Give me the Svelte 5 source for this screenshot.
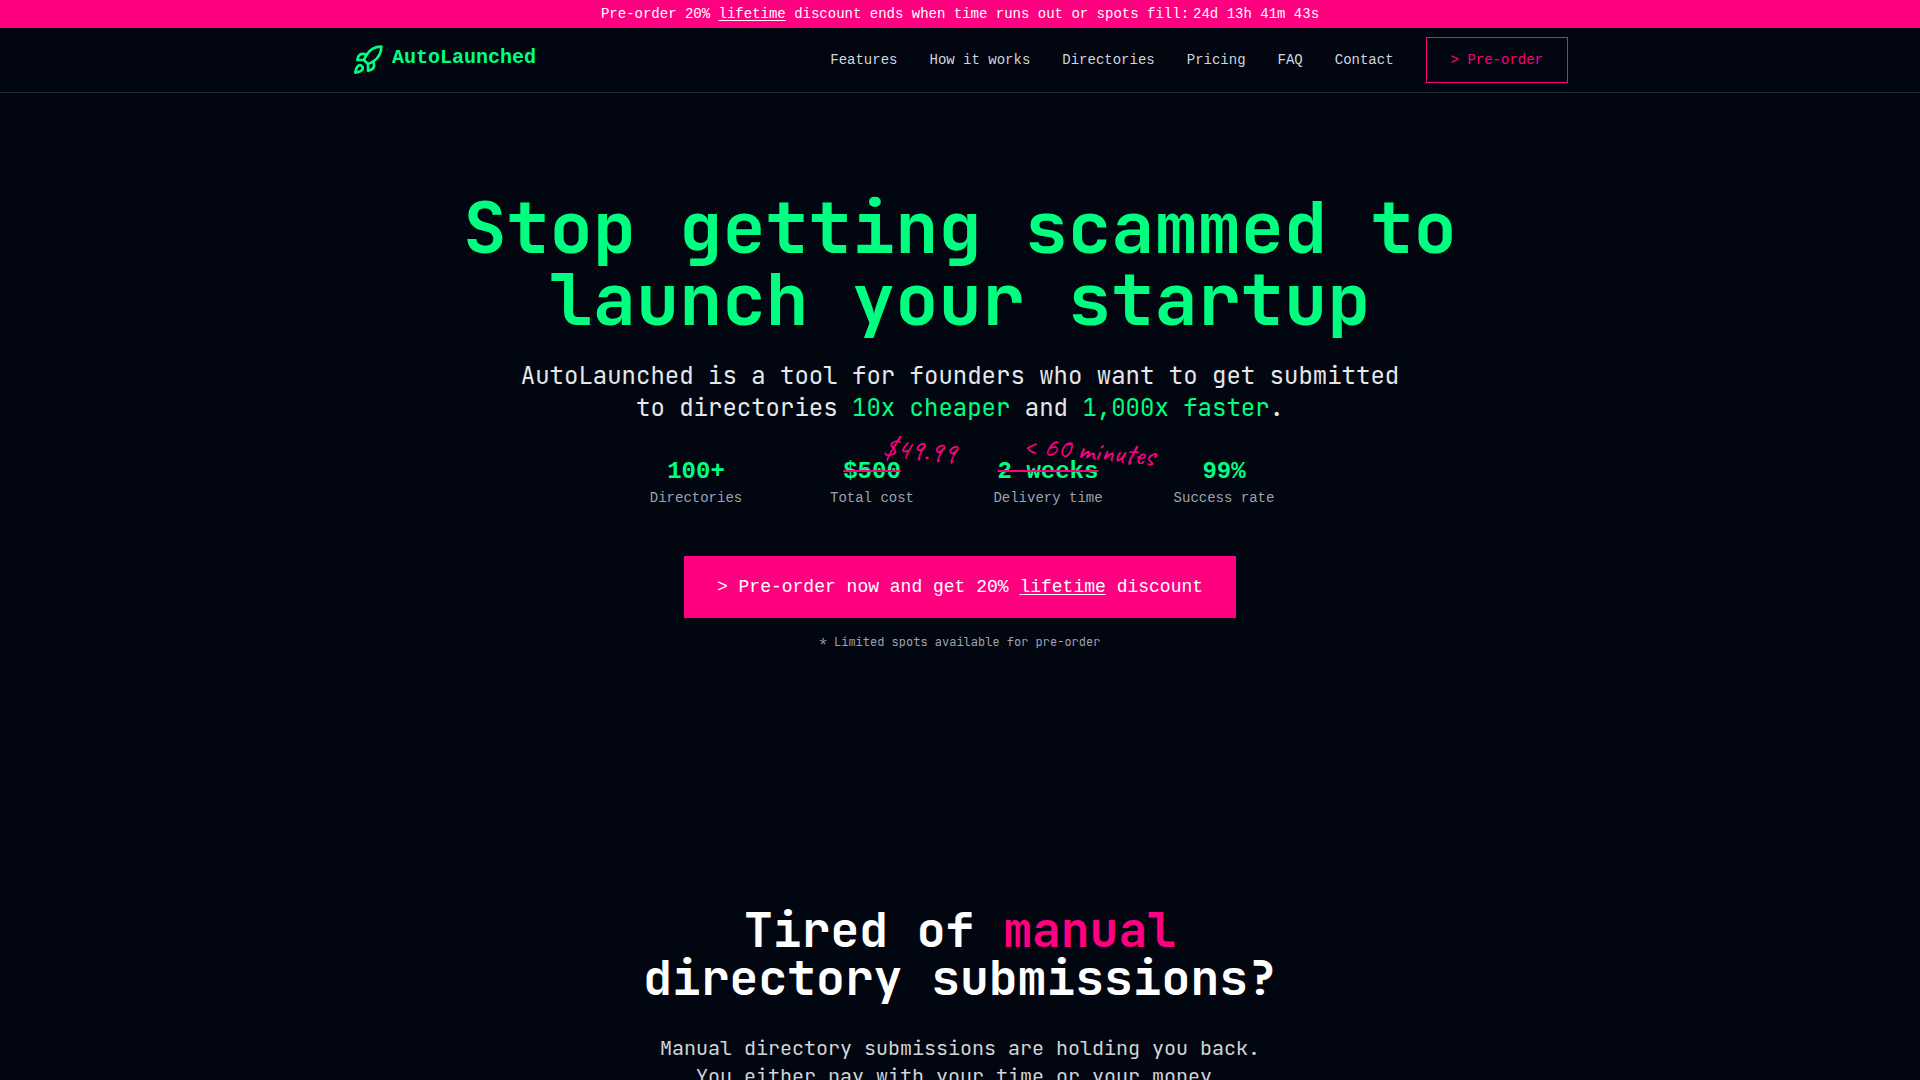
<script>
  const links = ['Features', 'How it works', 'Directories', 'Pricing', 'FAQ', 'Contact'];
  const stats = [
    { value: '100+', label: 'Directories' },
    { value: '$500', label: 'Total cost', note: '$49.99' },
    { value: '2 weeks', label: 'Delivery time', note: '< 60 minutes' },
    { value: '99%', label: 'Success rate' }
  ];
</script>

<div class="banner">
  <p>Pre-order 20% <u>lifetime</u> discount ends when time runs out or spots fill:</p>
  <time>24d 13h 41m 43s</time>
</div>

<header>
  <div class="bar">
    <a class="logo" href="#top">
      <svg viewBox="0 0 24 24" aria-hidden="true">
        <path d="M4.5 16.5c-1.5 1.26-2 5-2 5s3.74-.5 5-2c.71-.84.7-2.13-.09-2.91a2.18 2.18 0 0 0-2.91-.09z" />
        <path d="m12 15-3-3a22 22 0 0 1 2-3.95A12.88 12.88 0 0 1 22 2c0 2.72-.78 7.5-6 11a22.35 22.35 0 0 1-4 2z" />
        <path d="M9 12H4s.55-3.03 2-4c1.62-1.08 5 0 5 0" />
        <path d="M12 15v5s3.03-.55 4-2c1.08-1.62 0-5 0-5" />
      </svg>
      <span>AutoLaunched</span>
    </a>
    <nav>
      {#each links as link}
        <a href="#section">{link}</a>
      {/each}
      <button class="outline">&gt; Pre-order</button>
    </nav>
  </div>
</header>

<main>
  <section class="hero">
    <h1>Stop getting scammed to launch your startup</h1>
    <p class="lead">
      AutoLaunched is a tool for founders who want to get submitted to directories
      <em>10x cheaper</em> and <em>1,000x faster</em>.
    </p>
    <dl class="stats">
      {#each stats as stat}
        <div class="stat">
          <dt>{stat.label}</dt>
          <dd>
            {#if stat.note}
              <span class="old"><s>{stat.value}</s><span class="note">{stat.note}</span></span>
            {:else}
              {stat.value}
            {/if}
          </dd>
        </div>
      {/each}
    </dl>
    <button class="cta">&gt; Pre-order now and get 20% <u>lifetime</u> discount</button>
    <p class="small">* Limited spots available for pre-order</p>
  </section>

  <section class="problem">
    <h2>Tired of <span>manual</span><br />directory submissions?</h2>
    <p>Manual directory submissions are holding you back.<br />You either pay with your time or your money.</p>
  </section>
</main>

<style>
  :global(body) {
    margin: 0;
    background: #020610;
    color: #fff;
    font-family: 'Liberation Mono', monospace;
  }

  p, h1, h2, dl, dd {
    margin: 0;
  }

  a {
    color: inherit;
    text-decoration: none;
  }

  button {
    font-family: inherit;
    border: 1px solid #ff0080;
    cursor: pointer;
  }

  u {
    text-underline-offset: 2px;
  }

  .banner {
    display: flex;
    justify-content: center;
    gap: 4px;
    padding: 4px 16px;
    background: #ff0080;
    font-size: 14px;
    line-height: 20px;
  }

  header {
    border-bottom: 1px solid #1f2937;
  }

  .bar {
    display: flex;
    align-items: center;
    justify-content: space-between;
    box-sizing: border-box;
    max-width: 1280px;
    min-height: 64px;
    margin: 0 auto;
    padding: 0 32px;
  }

  .logo {
    display: flex;
    align-items: flex-start;
    gap: 8px;
    color: #00ff80;
    font-size: 20px;
    font-weight: 700;
    line-height: 28px;
  }

  .logo svg {
    width: 32px;
    height: 32px;
    fill: none;
    stroke: currentColor;
    stroke-width: 2;
    stroke-linecap: round;
    stroke-linejoin: round;
  }

  nav {
    display: flex;
    align-items: center;
    gap: 32px;
    color: #d1d5db;
    font-size: 14px;
    line-height: 20px;
  }

  .outline {
    padding: 12px 24px;
    background: transparent;
    color: #ff0080;
    font-size: 14px;
    line-height: 20px;
  }

  .hero {
    display: flex;
    flex-direction: column;
    align-items: center;
    padding: 99px 32px 128px;
    text-align: center;
  }

  h1, h2, .lead, .small, .problem p {
    font-family: 'JetBrains Mono', 'DejaVu Sans Mono', monospace;
  }

  h1 {
    max-width: 1024px;
    color: #00ff80;
    font-size: 72px;
    line-height: 72px;
    font-weight: 700;
  }

  .lead {
    max-width: 896px;
    margin-top: 24px;
    color: #e5e7eb;
    font-size: 24px;
    line-height: 32px;
  }

  .lead em {
    color: #00ff80;
    font-style: normal;
  }

  .stats {
    display: grid;
    grid-template-columns: repeat(4, 1fr);
    gap: 32px;
    width: 100%;
    max-width: 672px;
    margin-top: 32px;
  }

  .stat {
    display: flex;
    flex-direction: column-reverse;
  }

  dt {
    color: #9ca3af;
    font-size: 14px;
    line-height: 20px;
  }

  dd {
    color: #00ff80;
    font-size: 24px;
    font-weight: 700;
    line-height: 32px;
  }

  .old {
    position: relative;
  }

  s {
    text-decoration: line-through 2px #ff0080;
  }

  .note {
    position: absolute;
    top: -24px;
    right: -56px;
    color: #ff0080;
    font-family: 'Caveat', 'Lato', cursive;
    font-size: 30px;
    font-weight: 400;
    white-space: nowrap;
    transform: rotate(5deg);
  }

  .cta {
    margin-top: 48px;
    padding: 16px 32px;
    background: #ff0080;
    color: #fff;
    font-size: 18px;
    line-height: 28px;
  }

  .small {
    margin-top: 16px;
    color: #9ca3af;
    font-size: 12px;
    line-height: 16px;
  }

  .problem {
    padding: 128px 32px;
    text-align: center;
  }

  h2 {
    font-size: 48px;
    line-height: 48px;
    font-weight: 700;
  }

  h2 span {
    color: #ff0080;
  }

  .problem p {
    margin-top: 32px;
    color: #d1d5db;
    font-size: 20px;
    line-height: 28px;
  }
</style>
